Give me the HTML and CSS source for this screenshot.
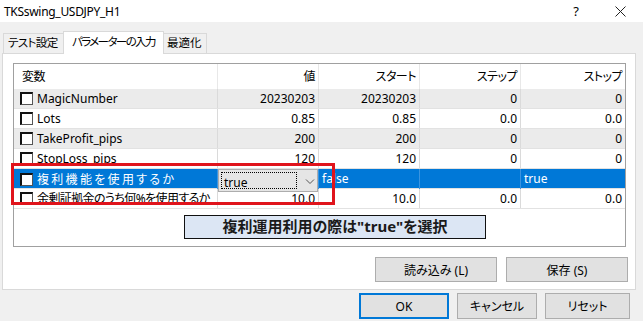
FILE: index.html
```html
<!DOCTYPE html>
<html lang="ja">
<head>
  <meta charset="UTF-8">
  <meta name="viewport" content="width=device-width, initial-scale=1.0">
  <title>TKSswing_USDJPY_H1</title>
  <link rel="stylesheet" href="styles.css">
</head>
<body>
  <div class="dialog">
    <!-- タイトルバー -->
    <div class="titlebar">
      <span class="title">TKSswing_USDJPY_H1</span>
      <div class="title-btns">
        <span class="help">?</span>
        <svg class="close" width="11" height="11" viewBox="0 0 11 11">
          <path d="M0.5 0.5 L10.5 10.5 M10.5 0.5 L0.5 10.5" stroke="#222" stroke-width="1" fill="none"/>
        </svg>
      </div>
    </div>

    <!-- タブ -->
    <div class="tabs">
      <div class="tab">テスト設定</div>
      <div class="tab active">パラメーターの入力</div>
      <div class="tab">最適化</div>
    </div>

    <div class="panel">
      <div class="listview">
        <div class="row head">
          <div class="cell">変数</div>
          <div class="cell num">値</div>
          <div class="cell num">スタート</div>
          <div class="cell num">ステップ</div>
          <div class="cell num">ストップ</div>
        </div>
        <div class="row alt">
          <div class="cell name"><span class="check"></span>MagicNumber</div>
          <div class="cell num">20230203</div>
          <div class="cell num">20230203</div>
          <div class="cell num">0</div>
          <div class="cell num">0</div>
        </div>
        <div class="row">
          <div class="cell name"><span class="check"></span>Lots</div>
          <div class="cell num">0.85</div>
          <div class="cell num">0.85</div>
          <div class="cell num">0.0</div>
          <div class="cell num">0.0</div>
        </div>
        <div class="row alt">
          <div class="cell name"><span class="check"></span>TakeProfit_pips</div>
          <div class="cell num">200</div>
          <div class="cell num">200</div>
          <div class="cell num">0</div>
          <div class="cell num">0</div>
        </div>
        <div class="row">
          <div class="cell name"><span class="check"></span>StopLoss_pips</div>
          <div class="cell num">120</div>
          <div class="cell num">120</div>
          <div class="cell num">0</div>
          <div class="cell num">0</div>
        </div>
        <div class="row selected">
          <div class="cell name wide"><span class="check"></span>複利機能を使用するか</div>
          <div class="cell editor">
            <div class="combo">
              <span class="combo-text">true</span>
              <svg class="chevron" width="10" height="6" viewBox="0 0 10 6">
                <path d="M1 0.5 L5 4.5 L9 0.5" stroke="#555" stroke-width="1" fill="none"/>
              </svg>
            </div>
          </div>
          <div class="cell">false</div>
          <div class="cell"></div>
          <div class="cell">true</div>
        </div>
        <div class="row">
          <div class="cell name tight"><span class="check"></span>余剰証拠金のうち何%を使用するか</div>
          <div class="cell num">10.0</div>
          <div class="cell num">10.0</div>
          <div class="cell num">0.0</div>
          <div class="cell num">0.0</div>
        </div>

        <!-- 注釈 -->
        <div class="mark"></div>
        <div class="note">複利運用利用の際は"true"を選択</div>
      </div>

      <div class="panel-btns">
        <button class="btn wide-btn">読み込み (L)</button>
        <button class="btn wide-btn">保存 (S)</button>
      </div>
    </div>

    <div class="dialog-btns">
      <button class="btn ok">OK</button>
      <button class="btn cancel">キャンセル</button>
      <button class="btn reset">リセット</button>
    </div>
  </div>
</body>
</html>
```

FILE: styles.css
```css
* { box-sizing: border-box; margin: 0; padding: 0; }

body {
  font-family: "Noto Sans", "Noto Sans CJK JP", sans-serif;
  font-size: 12px;
  font-feature-settings: "palt";
  color: #000;
  background: #f0f0f0;
  width: 643px;
  height: 321px;
  overflow: hidden;
}

/* タイトルバー */
.titlebar {
  height: 22px;
  background: #fff;
  display: flex;
  align-items: center;
  justify-content: space-between;
  padding: 0 17px 0 4px;
}

.title {
  font-size: 12px;
  letter-spacing: -0.3px;
}

.title-btns {
  display: flex;
  align-items: center;
  gap: 36px;
}

.help {
  font-size: 13px;
}

/* タブ */
.tabs {
  display: flex;
  align-items: flex-end;
  height: 22px;
  margin-top: 9px;
  padding-left: 3px;
}

.tab {
  height: 20px;
  border: 1px solid #d9d9d9;
  border-bottom: none;
  background: #f0f0f0;
  padding: 0 0 0 4px;
  font-size: 11.5px;
  line-height: 18px;
  white-space: nowrap;
  overflow: hidden;
  letter-spacing: -0.6px;
}

.tab:first-child {
  width: 60px;
  border-right: none;
}

.tab.active {
  width: 101px;
  height: 23px;
  margin-bottom: -1px;
  background: #fff;
  padding: 0 0 0 8px;
  line-height: 20px;
  letter-spacing: -1.6px;
  position: relative;
  z-index: 1;
}

.tab:last-child {
  width: 43px;
  border-left: none;
  padding: 0 0 0 3px;
  letter-spacing: 0;
}

.panel {
  margin-left: 2px;
  width: 634px;
  height: 237px;
  background: #fff;
  border: 1px solid #d9d9d9;
  padding: 9px 7px 0 10px;
}

/* リストビュー */
.listview {
  position: relative;
  width: 613px;
  height: 184px;
  border: 1px solid #a0a0a0;
  background: #fff;
}

.row {
  display: grid;
  grid-template-columns: 204px 101px 101px 101px 104px;
  height: 20px;
  border-bottom: 1px solid #e2e2e2;
}

.row.head {
  height: 25px;
  border-bottom: none;
}

.row.head .cell {
  line-height: 25px;
  border-right-color: #e8e8e8;
  letter-spacing: -0.5px;
}

.row.head .cell:first-child {
  padding-left: 8px;
}

.row.alt {
  background: #ebebeb;
}

.cell {
  border-right: 1px solid #dadada;
  padding: 0 3px;
  line-height: 19px;
  white-space: nowrap;
}

.cell:last-child {
  border-right: none;
}

.num {
  text-align: right;
}

.name {
  display: flex;
  align-items: center;
  padding-left: 6px;
}

.name.wide {
  letter-spacing: 2.3px;
}

.name.tight {
  letter-spacing: -0.6px;
}

.check {
  width: 13px;
  height: 13px;
  flex: none;
  background: #fff;
  border: 1px solid #555;
  border-top: 2px solid #111;
  border-left: 2px solid #111;
  margin-right: 4px;
}

.row.selected {
  background: #0078d7;
  color: #fff;
}

.row.selected .cell {
  border-right-color: #3a94e0;
}

.cell.editor {
  padding: 0;
}

.combo {
  position: relative;
  z-index: 1;
  width: 100px;
  height: 23px;
  margin-bottom: -3px;
  background: #e5e5e5;
  border: 1px solid #adadad;
  display: flex;
  align-items: center;
  color: #000;
}

.combo-text {
  width: 76px;
  height: 17px;
  margin-left: 2px;
  border: 1px dotted #000;
  padding: 1px 0 0 2px;
  line-height: 17px;
}

.chevron {
  margin-left: 8px;
  margin-top: 2px;
}

/* 注釈 */
.mark {
  position: absolute;
  left: -3px;
  top: 99px;
  width: 324px;
  height: 42px;
  border: 3px solid #e0141c;
}

.note {
  position: absolute;
  left: 170px;
  top: 151px;
  width: 302px;
  height: 24px;
  background: #dce6f4;
  border: 1px solid #111;
  text-align: center;
  font-weight: bold;
  font-size: 15px;
  line-height: 21px;
  color: #1a1a1a;
}

/* ボタン */
.btn {
  font-family: inherit;
  font-size: 12px;
  font-feature-settings: "palt";
  background: #e1e1e1;
  border: 1px solid #adadad;
  color: #000;
}

.panel-btns {
  display: flex;
  justify-content: flex-end;
  gap: 9px;
  margin-top: 10px;
}

.wide-btn {
  width: 122px;
  height: 25px;
}

.dialog-btns {
  display: flex;
  justify-content: flex-end;
  gap: 8px;
  margin-top: 3px;
  padding-right: 13px;
}

.dialog-btns .btn {
  height: 26px;
}

.ok {
  width: 90px;
  border: 2px solid #0078d7;
}

.cancel {
  width: 80px;
}

.reset {
  width: 85px;
}
```
